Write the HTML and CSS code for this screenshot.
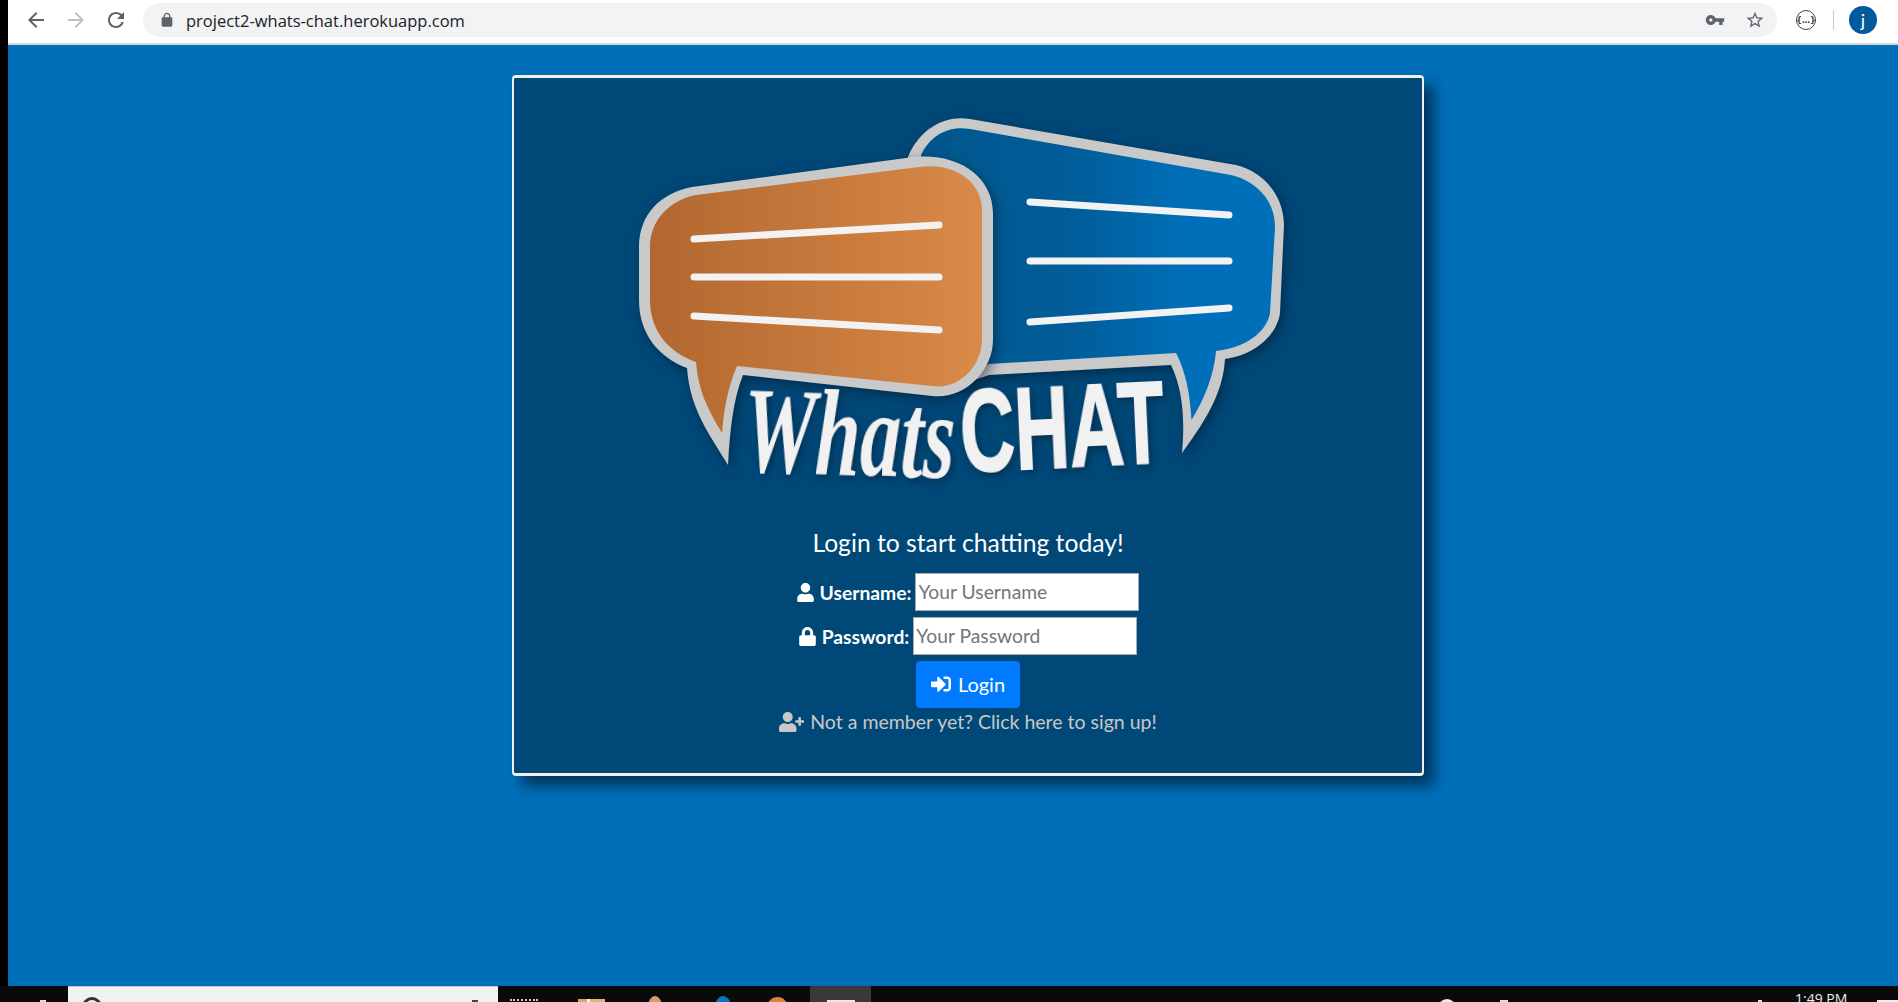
FILE: index.html
```html
<!DOCTYPE html>
<html lang="en">
<head>
<meta charset="utf-8">
<title>WhatsChat</title>
<link rel="stylesheet" href="styles.css">
</head>
<body>
<div class="desktop">
  <div class="edge"></div>
  <div class="window">
    <header class="toolbar">
      <svg class="nav nav-back" viewBox="0 0 24 24"><path d="M20 11H7.83l5.59-5.59L12 4l-8 8 8 8 1.41-1.41L7.83 13H20v-2z"/></svg>
      <svg class="nav nav-fwd" viewBox="0 0 24 24"><path d="M4 11h12.17l-5.59-5.59L12 4l8 8-8 8-1.41-1.41L16.17 13H4v-2z"/></svg>
      <svg class="nav nav-back" viewBox="0 0 24 24"><path d="M17.65 6.35C16.2 4.9 14.21 4 12 4c-4.42 0-7.99 3.58-7.99 8s3.57 8 7.99 8c3.73 0 6.84-2.55 7.73-6h-2.08c-.82 2.33-3.04 4-5.65 4-3.31 0-6-2.69-6-6s2.69-6 6-6c1.66 0 3.14.69 4.22 1.78L13 11h7V4l-2.35 2.35z"/></svg>
      <div class="omnibox">
        <svg class="lock" viewBox="0 0 24 24"><path d="M18 8h-1V6c0-2.76-2.24-5-5-5S7 3.24 7 6v2H6c-1.1 0-2 .9-2 2v10c0 1.1.9 2 2 2h12c1.1 0 2-.9 2-2V10c0-1.1-.9-2-2-2zM9 6c0-1.66 1.34-3 3-3s3 1.34 3 3v2H9V6z"/></svg>
        <span class="url">project2-whats-chat.herokuapp.com</span>
        <svg class="omni-icon key" viewBox="0 0 24 24"><path d="M12.65 10C11.83 7.67 9.61 6 7 6c-3.31 0-6 2.69-6 6s2.69 6 6 6c2.61 0 4.83-1.67 5.65-4H17v4h4v-4h2v-4H12.65zM7 14c-1.1 0-2-.9-2-2s.9-2 2-2 2 .9 2 2-.9 2-2 2z"/></svg>
        <svg class="omni-icon star" viewBox="0 0 24 24"><path d="M22 9.24l-7.19-.62L12 2 9.19 8.63 2 9.24l5.46 4.73L5.82 21 12 17.27 18.18 21l-1.63-7.03L22 9.24zM12 15.4l-3.76 2.27 1-4.28-3.32-2.88 4.38-.38L12 6.1l1.71 4.04 4.38.38-3.32 2.88 1 4.28L12 15.4z"/></svg>
      </div>
      <span class="ext"><span class="ext-dots">{…}</span></span>
      <span class="divider"></span>
      <span class="avatar">j</span>
    </header>
    <main class="page">
      <section class="card">
        <svg class="logo" viewBox="0 0 680 400" role="img" aria-label="WhatsChat logo">
          <defs>
            <linearGradient id="gradBlue" x1="0" x2="1" y1="0" y2="0"><stop offset="0" stop-color="#00568c"/><stop offset=".45" stop-color="#005e9b"/><stop offset=".75" stop-color="#006fb9"/><stop offset="1" stop-color="#006fb9"/></linearGradient>
            <linearGradient id="gradOrange" x1="0" x2="1" y1="0" y2="0"><stop offset="0" stop-color="#b1672f"/><stop offset="1" stop-color="#da8a48"/></linearGradient>
          </defs>
          <g class="bubble">
            <path class="rim" d="M288 57C298 32 322 14 350 19L616 65C645 72 664 97 664 125L660 213C657 235 635 255 605 259C603 290 590 315 562 353C565 320 563 290 551 265L369 275L340 285L288 100Z"/>
            <path fill="url(#gradBlue)" d="M301 55C310 36 328 25 350 29L611 75C636 81 655 100 655 127L650 213C647 232 625 248 596 251C594 275 585 298 571.5 320C570 295 566 272 556 253L369 264L330 280L301 100Z"/>
            <path class="line" d="M410 102L609 115M410 161H609M410 222L609 208"/>
          </g>
          <g class="bubble">
            <path class="rim" d="M72 87L286 58C335 50 373 75 373 113V240C373 270 345 300 312 296L123 275C113 300 110 330 108 365C90 335 70 310 67 268C40 258 19 235 19 200V147C19 115 40 93 72 87Z"/>
            <path fill="url(#gradOrange)" d="M76 95L299 67C335 62 362 82 362 110V240C362 265 340 290 312 286L117 266C107 290 104 310 102 333C88 310 78 290 76 262C50 253 30 232 30 200V147C30 120 50 100 76 95Z"/>
            <path class="line" d="M74 139L319 125M74 177H319M74 216L319 230"/>
          </g>
          <text class="word-script" transform="translate(122 371) rotate(2)" textLength="212" lengthAdjust="spacingAndGlyphs">Whats</text>
          <text class="word-caps" transform="translate(342 372) rotate(-2.6)" textLength="204" lengthAdjust="spacingAndGlyphs">CHAT</text>
        </svg>
        <h1 class="title">Login to start chatting today!</h1>
        <form class="form">
          <div class="field">
            <label class="label" for="username"><svg class="fa" viewBox="0 0 448 512"><path d="M224 256c70.7 0 128-57.3 128-128S294.7 0 224 0 96 57.3 96 128s57.3 128 128 128zm89.6 32h-16.7c-22.2 10.2-46.9 16-72.9 16s-50.6-5.8-72.9-16h-16.7C60.2 288 0 348.2 0 422.4V464c0 26.5 21.5 48 48 48h352c26.5 0 48-21.5 48-48v-41.6c0-74.2-60.2-134.4-134.4-134.4z"/></svg>Username:</label>
            <input class="input" id="username" type="text" placeholder="Your Username">
          </div>
          <div class="field">
            <label class="label" for="password"><svg class="fa" viewBox="0 0 448 512"><path d="M400 224h-24v-72C376 68.2 307.8 0 224 0S72 68.2 72 152v72H48c-26.5 0-48 21.5-48 48v192c0 26.5 21.5 48 48 48h352c26.5 0 48-21.5 48-48V272c0-26.5-21.5-48-48-48zm-104 0H152v-72c0-39.7 32.3-72 72-72s72 32.3 72 72v72z"/></svg>Password:</label>
            <input class="input" id="password" type="password" placeholder="Your Password">
          </div>
          <button class="btn" type="button"><svg class="fa-btn" viewBox="0 0 512 512"><path d="M416 448h-84c-6.6 0-12-5.4-12-12v-40c0-6.6 5.4-12 12-12h84c17.7 0 32-14.3 32-32V160c0-17.7-14.3-32-32-32h-84c-6.6 0-12-5.4-12-12V76c0-6.6 5.4-12 12-12h84c53 0 96 43 96 96v192c0 53-43 96-96 96zm-47-201L201 79c-15-15-41-4.5-41 17v96H24c-13.3 0-24 10.7-24 24v96c0 13.3 10.7 24 24 24h136v96c0 21.5 26 32 41 17l168-168c9.3-9.4 9.3-24.6 0-34z"/></svg>Login</button>
          <a class="signup" href="#"><svg class="fa-plus" viewBox="0 0 640 512"><path d="M624 208h-64v-64c0-8.8-7.2-16-16-16h-32c-8.8 0-16 7.2-16 16v64h-64c-8.8 0-16 7.2-16 16v32c0 8.8 7.2 16 16 16h64v64c0 8.8 7.2 16 16 16h32c8.8 0 16-7.2 16-16v-64h64c8.8 0 16-7.2 16-16v-32c0-8.8-7.2-16-16-16zm-400 48c70.7 0 128-57.3 128-128S294.7 0 224 0 96 57.3 96 128s57.3 128 128 128zm89.6 32h-16.7c-22.2 10.2-46.9 16-72.9 16s-50.6-5.8-72.9-16h-16.7C60.2 288 0 348.2 0 422.4V464c0 26.5 21.5 48 48 48h352c26.5 0 48-21.5 48-48v-41.6c0-74.2-60.2-134.4-134.4-134.4z"/></svg>Not a member yet? Click here to sign up!</a>
        </form>
      </section>
    </main>
  </div>
</div>
<footer class="taskbar">
  <span class="tb-start"></span>
  <div class="tb-search"><span class="tb-ring"></span><span class="tb-mic"></span></div>
  <span class="tb-view"></span>
  <span class="tb-app tb-folder"></span>
  <span class="tb-app tb-hand"></span>
  <span class="tb-app tb-drop"></span>
  <span class="tb-app tb-ball"></span>
  <span class="tb-active"><span class="tb-win"></span></span>
  <span class="tb-spacer"></span>
  <span class="tb-sys tb-cloud"></span>
  <span class="tb-sys tb-up"></span>
  <span class="tb-sys tb-dot"></span>
  <span class="tb-clock">1:49 PM</span>
  <span class="tb-note"></span>
</footer>
</body>
</html>
```
FILE: styles.css
```css
* { box-sizing: border-box; }
html, body { margin: 0; height: 1002px; overflow: hidden; background: #0a0a0a; }
.desktop { display: flex; height: 986px; }
.edge { width: 8px; background: #000; flex: none; }
.window { flex: 1; display: flex; flex-direction: column; min-width: 0; }

.toolbar { height: 45px; flex: none; background: #fff; border-bottom: 2px solid #d8d8d8; display: flex; align-items: center; padding: 0 0 3px 16px; }
.nav { width: 24px; height: 24px; margin-right: 16px; flex: none; }
.nav-back { fill: #5f6368; }
.nav-fwd { fill: #bdc1c6; }
.omnibox { width: 1634px; height: 34px; flex: none; margin-left: -1px; background: #f1f3f4; border-radius: 17px; display: flex; align-items: center; padding: 0 12px 0 16px; }
.lock { width: 16px; height: 16px; fill: #5f6368; flex: none; margin-right: 11px; }
.url { font: 16.5px "Open Sans", sans-serif; color: #202124; flex: 1; white-space: nowrap; }
.omni-icon { fill: #5f6368; width: 20px; height: 20px; flex: none; }
.star { margin-left: 20px; }
.ext { width: 20px; height: 20px; margin-left: 19px; border: 1.5px solid #3c4043; border-radius: 50%; display: flex; align-items: center; justify-content: center; flex: none; }
.ext-dots { font: 700 8px "DejaVu Sans", sans-serif; color: #3c4043; white-space: nowrap; }
.divider { width: 1px; height: 20px; background: #c8c8c8; margin: 0 15px 0 17px; flex: none; }
.avatar { width: 28px; height: 28px; border-radius: 50%; background: #005a9c; color: #fff; font: 18px "Lato", sans-serif; display: flex; align-items: center; justify-content: center; flex: none; }

.page { flex: 1; background: #006fb9; padding: 30px 0 0 504px; }
.card { width: 912px; height: 701px; background: #004878; border: solid #f0f0f0; border-width: 3px 2px; border-radius: 4px; box-shadow: 10px 10px 14px rgba(0,40,70,.8); display: flex; flex-direction: column; align-items: center; padding-top: 22px; font-family: "Lato", sans-serif; color: #fff; }

.logo { width: 680px; height: 400px; flex: none; display: block; margin-left: -16px; }
.bubble { filter: drop-shadow(3px 4px 6px rgba(0,20,40,.5)); }
.rim { fill: #c9c9c9; }
.line { stroke: #f2f2f2; stroke-width: 7; stroke-linecap: round; fill: none; }
.word-script { font: italic 700 122px "Liberation Serif", serif; fill: #f1f1f1; filter: drop-shadow(2px 3px 4px rgba(0,20,40,.5)); }
.word-caps { font: 700 116px "Liberation Sans", sans-serif; fill: #f1f1f1; stroke: #f1f1f1; stroke-width: 2; filter: drop-shadow(2px 3px 4px rgba(0,20,40,.5)); }

.title { font-size: 24.7px; font-weight: 400; margin: 27px 0 0; line-height: 32px; }
.form { display: flex; flex-direction: column; align-items: center; margin-top: 14px; }
.field { display: flex; align-items: center; height: 38px; margin-bottom: 6px; }
.label { font-size: 19.3px; font-weight: 700; display: flex; align-items: center; margin-right: 4px; }
.fa { width: 17px; height: 19px; fill: #fff; margin-right: 6px; }
.input { width: 224px; height: 38px; border: 1px solid #a9a9a9; background: #fff; padding: 0 2px 2px; font: 19.3px "Lato", sans-serif; color: #333; border-radius: 0; outline: none; }
.input::placeholder { color: #757575; opacity: 1; }
.btn { width: 104px; height: 47px; background: #007bff; border: 0; border-radius: 4px; color: #fff; font: 20px "Lato", sans-serif; display: flex; align-items: center; justify-content: center; padding-bottom: 2px; }
.fa-btn { width: 20px; height: 20px; fill: #fff; margin-right: 7px; }
.signup { color: #c8c8c8; font-size: 19.5px; line-height: 24px; text-decoration: none; display: flex; align-items: center; margin-top: 2px; }
.fa-plus { width: 25px; height: 20px; fill: #c8c8c8; margin-right: 6px; }

.taskbar { height: 16px; background: #0a0a0a; display: flex; overflow: hidden; font: 14px "Open Sans", sans-serif; color: #eee; }
.tb-start { width: 6px; height: 2px; background: #ddd; margin: 14px 22px 0 40px; flex: none; }
.tb-search { width: 430px; height: 16px; flex: none; background: #f1f2f2; border-top: 1px solid #c8c8c8; display: flex; justify-content: space-between; padding: 10px 20px 0 14px; }
.tb-ring { width: 20px; height: 20px; border: 3px solid #333; border-radius: 50%; flex: none; }
.tb-mic { width: 6px; height: 3px; background: #444; margin-top: 3px; flex: none; }
.tb-view { width: 28px; height: 3px; margin: 13px 40px 0 12px; flex: none; border-top: 2px dotted #ccc; }
.tb-app { height: 22px; flex: none; }
.tb-folder { width: 27px; margin: 13px 43px 0 0; background: linear-gradient(90deg, #e2a264 0 35%, #f3f3f3 35% 45%, #e3b37c 45%); }
.tb-hand { width: 14px; margin: 10px 53px 0 0; background: #d99a6c; border-radius: 50% 50% 0 0; }
.tb-drop { width: 16px; margin: 10px 36px 0 0; background: #0d72c4; border-radius: 50% 50% 0 0; }
.tb-ball { width: 21px; margin: 11px 22px 0 0; background: #d9823f; border-radius: 50%; }
.tb-active { width: 61px; height: 16px; background: #3a3838; flex: none; display: flex; justify-content: center; padding-top: 14px; }
.tb-win { width: 28px; height: 2px; background: #e8e8e8; }
.tb-spacer { flex: 1; }
.tb-sys { flex: none; }
.tb-cloud { width: 18px; height: 18px; border-radius: 50%; background: #eee; margin: 13px 44px 0 0; }
.tb-up { width: 8px; height: 3px; background: #ddd; margin: 14px 250px 0 0; }
.tb-dot { width: 4px; height: 2px; background: #ddd; margin: 14px 33px 0 0; }
.tb-clock { margin-top: 4px; line-height: 18px; width: 82px; flex: none; white-space: nowrap; }
.tb-note { width: 21px; height: 2px; background: #eee; margin-top: 14px; flex: none; }
```
